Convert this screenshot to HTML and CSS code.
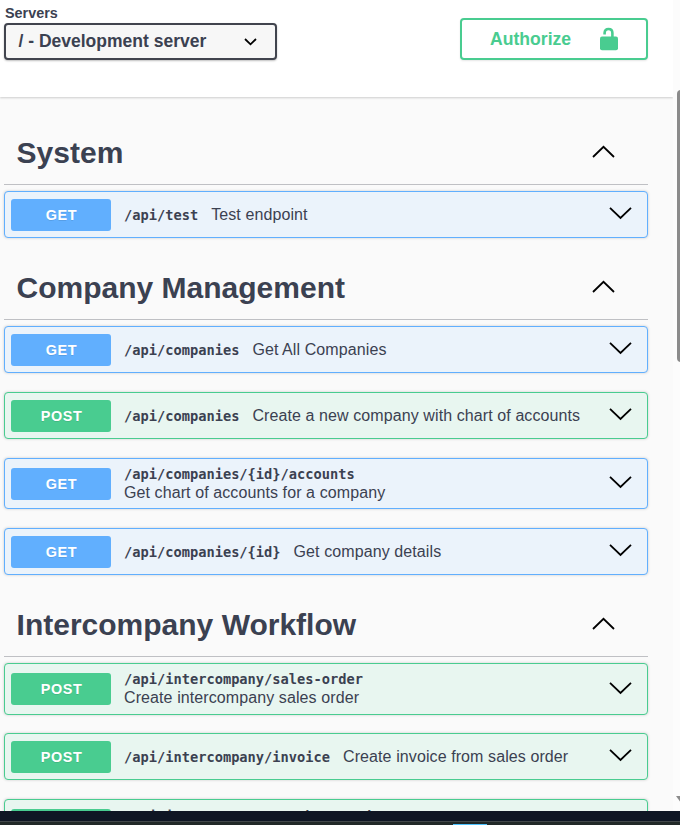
FILE: index.html
```html
<!DOCTYPE html>
<html lang="en">
<head>
<meta charset="utf-8">
<title>API documentation</title>
<link rel="stylesheet" href="styles.css">
</head>
<body>
<svg class="defs" width="0" height="0">
  <symbol id="down" viewBox="0 0 24 14"><path d="M2 1.8 12.5 12 23 1.8"/></symbol>
  <symbol id="up" viewBox="0 0 24 14"><path d="M2 12 12.5 1.8 23 12"/></symbol>
</svg>
<div class="page">
  <header class="schemes">
    <div class="servers">
      <span class="servers-label">Servers</span>
      <div class="select"><span>/ - Development server</span>
        <svg class="caret" width="13" height="8" viewBox="0 0 13 8"><path d="M1 1 6.5 6.3 12 1"/></svg>
      </div>
    </div>
    <button class="authorize"><span>Authorize</span>
      <svg width="20" height="24" viewBox="0 0 20 24"><path class="shackle" d="M5.6 7.5V6C5.6 3.4 7.2 2 9.5 2s3.9 1.4 3.9 4v4"/><rect x="1" y="9.6" width="18" height="13.6" rx="2"/></svg>
    </button>
  </header>
  <main>
    <section>
      <h2>System<svg class="chev"><use href="#up"/></svg></h2>
      <div class="op get"><b class="method">GET</b><div class="info"><code>/api/test</code><span>Test endpoint</span></div><svg class="chev"><use href="#down"/></svg></div>
    </section>
    <section>
      <h2>Company Management<svg class="chev"><use href="#up"/></svg></h2>
      <div class="op get"><b class="method">GET</b><div class="info"><code>/api/companies</code><span>Get All Companies</span></div><svg class="chev"><use href="#down"/></svg></div>
      <div class="op post"><b class="method">POST</b><div class="info"><code>/api/companies</code><span>Create a new company with chart of accounts</span></div><svg class="chev"><use href="#down"/></svg></div>
      <div class="op get stacked"><b class="method">GET</b><div class="info"><code>/api/companies/{id}/accounts</code><span>Get chart of accounts for a company</span></div><svg class="chev"><use href="#down"/></svg></div>
      <div class="op get"><b class="method">GET</b><div class="info"><code>/api/companies/{id}</code><span>Get company details</span></div><svg class="chev"><use href="#down"/></svg></div>
    </section>
    <section>
      <h2>Intercompany Workflow<svg class="chev"><use href="#up"/></svg></h2>
      <div class="op post stacked tall"><b class="method">POST</b><div class="info"><code>/api/intercompany/sales-order</code><span>Create intercompany sales order</span></div><svg class="chev"><use href="#down"/></svg></div>
      <div class="op post"><b class="method">POST</b><div class="info"><code>/api/intercompany/invoice</code><span>Create invoice from sales order</span></div><svg class="chev"><use href="#down"/></svg></div>
      <div class="op post stacked tall clipped"><b class="method"></b><div class="info"><code>/api/intercompany/purchase-order</code></div></div>
    </section>
  </main>
  <div class="scrollbar"><i class="thumb"></i><i class="arrow"></i></div>
</div>
<footer class="taskbar"><i class="active-app"></i></footer>
</body>
</html>
```
FILE: styles.css
```css
* { box-sizing: border-box; }
body {
  margin: 0;
  height: 825px;
  overflow: hidden;
  background: #fafafa;
  color: #3b4151;
  font-family: "Liberation Sans", Arial, sans-serif;
}
.defs { display: block; height: 0; }
.page { position: relative; height: 811px; overflow: hidden; }
.schemes {
  display: flex;
  justify-content: space-between;
  align-items: flex-start;
  width: 673px;
  height: 97px;
  padding: 5px 25px 0 4px;
  background: #fff;
  box-shadow: 0 1px 2px rgba(0, 0, 0, .18);
}
.servers-label {
  display: block;
  height: 18px;
  padding-left: 1px;
  font-size: 14.4px;
  line-height: 16px;
  font-weight: 700;
}
.select {
  display: flex;
  justify-content: space-between;
  align-items: center;
  width: 273px;
  height: 37px;
  padding: 0 18px 0 12.5px;
  border: 2px solid #41444e;
  border-radius: 4px;
  background: #f7f7f7;
  box-shadow: 0 1px 2px rgba(0, 0, 0, .25);
  font-size: 17.5px;
  font-weight: 700;
  white-space: nowrap;
}
.caret { fill: none; stroke: #000; stroke-width: 1.8; margin-top: 1px; }
.authorize {
  display: flex;
  justify-content: space-between;
  align-items: center;
  width: 188px;
  height: 42px;
  margin-top: 13px;
  padding: 0 27.5px 0 28px;
  border: 2px solid #49cc90;
  border-radius: 4px;
  background: #fff;
  box-shadow: 0 1px 2px rgba(0, 0, 0, .1);
  color: #49cc90;
  font: 700 17.6px "Liberation Sans", Arial, sans-serif;
}
.authorize svg { fill: #49cc90; margin-top: -1px; }
.authorize .shackle { fill: none; stroke: #49cc90; stroke-width: 2.6; }
main { width: 648px; padding: 25px 0 0 4px; }
h2 {
  display: flex;
  justify-content: space-between;
  align-items: center;
  height: 63px;
  margin: 0 0 6px;
  padding: 0 33px 0 12.6px;
  border-bottom: 1px solid #bfc0c4;
  font-size: 30px;
}
.chev {
  flex: none;
  width: 24px;
  height: 14px;
  fill: none;
  stroke: #000;
  stroke-width: 1.8;
}
h2 .chev { margin-top: -3px; }
.op {
  display: flex;
  align-items: center;
  height: 47px;
  margin-bottom: 19px;
  padding: 0 15px 0 6px;
  border: 1px solid;
  border-radius: 4px;
  box-shadow: 0 0 3px rgba(0, 0, 0, .19);
}
.get { border-color: #61affe; background: #ebf3fb; }
.post { border-color: #49cc90; background: #e8f6f0; }
.op .chev { margin: -3px 0 0 auto; }
.method {
  width: 100px;
  height: 32px;
  margin-right: 13px;
  border-radius: 3px;
  color: #fff;
  font-size: 14.4px;
  line-height: 32px;
  letter-spacing: .6px;
  text-indent: 1px;
  text-align: center;
  text-shadow: 0 1px 0 rgba(0, 0, 0, .1);
}
.get .method { background: #61affe; }
.post .method { background: #49cc90; }
.info { display: flex; align-items: baseline; gap: 13px; white-space: nowrap; }
.info span { font-size: 16px; line-height: 18px; letter-spacing: .095px; }
code {
  font: 700 13.7px/18px "DejaVu Sans Mono", monospace;
}
.stacked { height: 51px; }
.tall { height: 52px; margin-bottom: 18px; }
.stacked .info { flex-direction: column; gap: 0; }
.stacked code { margin-top: -1px; }
.stacked span { margin-top: 1px; }
.clipped { align-items: flex-start; padding-top: 9px; }
.clipped .info { margin-top: -1px; }
.scrollbar { position: absolute; top: 0; right: 0; width: 7px; height: 811px; background: #fcfcfc; }
.thumb {
  position: absolute;
  top: 90px;
  left: 4px;
  width: 8px;
  height: 272px;
  border-radius: 4px;
  background: #8b8b8b;
}
.arrow {
  position: absolute;
  top: 796px;
  left: 3px;
  border: 5px solid transparent;
  border-top: 7px solid #8b8b8b;
  border-bottom: 0;
}
.taskbar {
  height: 14px;
  border-top: 10px solid #0f1624;
  background: #212928;
  box-shadow: inset 0 1px 0 #42484a;
  position: relative;
}
.active-app {
  position: absolute;
  left: 453px;
  bottom: 0;
  width: 34px;
  height: 1px;
  background: #4cc2ff;
}
```
